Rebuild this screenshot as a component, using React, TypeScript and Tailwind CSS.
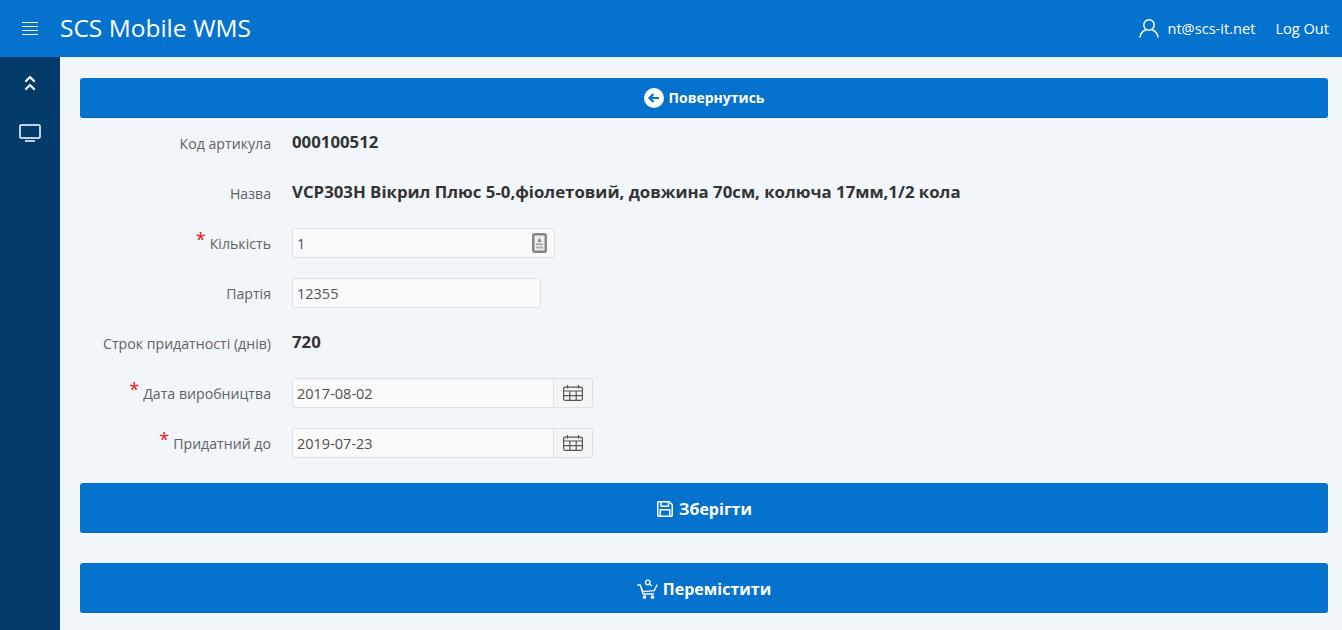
import React from 'react';

const FONT = "font-['Open_Sans','Noto_Sans',sans-serif]";

const SaveIcon = () => (
  <svg width="18" height="18" viewBox="0 0 18 18" fill="none" stroke="currentColor" strokeWidth="1.5" strokeLinejoin="round">
    <path d="M1.75 2.75a1 1 0 0 1 1-1h10.5l3 3v10.5a1 1 0 0 1-1 1H2.75a1 1 0 0 1-1-1z" />
    <path d="M5 1.75v4.5h7.5v-4.5" />
    <path d="M4.25 16.25v-6.5h9.5v6.5" />
  </svg>
);

const CartIcon = () => (
  <svg width="21" height="20" viewBox="0 0 21 20" fill="none" stroke="currentColor" strokeWidth="1.3" strokeLinecap="round" strokeLinejoin="round">
    <path d="M0.8 6h2.6l2.6 9h10.4" />
    <path d="M4.4 9l1.6 3.6 11.2-1L20 6" />
    <circle cx="10.8" cy="3.4" r="2.2" />
    <path d="M12.4 5l2.2 1.8" />
    <circle cx="7.5" cy="18" r="1.2" fill="currentColor" />
    <circle cx="15.5" cy="18" r="1.2" fill="currentColor" />
  </svg>
);

const CalendarIcon = () => (
  <svg width="20" height="16" viewBox="0 0 20 16" fill="none" stroke="#555" strokeWidth="1.2">
    <rect x="0.6" y="2.1" width="18.8" height="13.2" rx="1.5" />
    <path d="M0.6 6h18.8M0.6 10.6h18.8M6.8 6v9.3M13.2 6v9.3" />
    <path d="M4.5 0v3.5M15.5 0v3.5" />
  </svg>
);

const BarcodeIcon = () => (
  <svg width="15" height="20" viewBox="0 0 15 20" fill="none">
    <rect x="1.25" y="1.25" width="12.5" height="17.5" rx="1.5" fill="#eee" stroke="#858585" strokeWidth="2.5" />
    <path d="M7.5 4.5l2.2 4.5h-4.4z" fill="#8c8c8c" />
    <rect x="4" y="10.5" width="7" height="1.5" fill="#a0a0a0" />
    <rect x="4" y="13.5" width="7" height="2" fill="#b0b0b0" />
  </svg>
);

const Label = ({ text, required }: { text: string; required?: boolean }) => (
  <label className="w-[191px] shrink-0 pt-[2px] text-right text-[14.15px] text-[#626262]">
    {required && <span className="relative -top-[3px] mr-[4px] text-[18px] leading-none text-[#f70d1a]">*</span>}
    {text}
  </label>
);

const Row = ({ children }: { children: React.ReactNode }) => (
  <div className="flex h-[50px] items-center gap-[21px]">{children}</div>
);

const Value = ({ children }: { children: React.ReactNode }) => (
  <span className="relative -top-[1px] text-[16.8px] font-bold text-[#333]">{children}</span>
);

const inputCls =
  'h-[30px] rounded-[3px] border border-[#e0e0e0] bg-[#fafafa] px-1 text-[14.5px] text-[#505050] outline-none';

const DateField = ({ value }: { value: string }) => (
  <div className="flex">
    <input readOnly value={value} className={`${inputCls} w-[262px] rounded-r-none`} />
    <button className="flex h-[30px] w-[39px] items-center justify-center rounded-r-[3px] border border-l-0 border-[#e0e0e0] bg-[#f5f5f5]">
      <CalendarIcon />
    </button>
  </div>
);

const ActionButton = ({ icon, text, tall }: { icon: React.ReactNode; text: string; tall?: boolean }) => (
  <button
    className={`flex w-full items-center justify-center gap-[5px] rounded-[3px] border-b border-[#0562b3] bg-[#0572ce] font-bold text-white ${
      tall ? 'h-[50px] pt-[2px] text-[16px]' : 'h-[40px] text-[14px]'
    }`}
  >
    {icon}
    {text}
  </button>
);

export default function App() {
  return (
    <div className={`flex h-[630px] flex-col overflow-hidden bg-[#f1f6fa] ${FONT}`}>
      <header className="flex h-[57px] shrink-0 items-center justify-between bg-[#0572ce] pr-[13px] text-white">
        <div className="flex items-center">
          <div className="flex w-[60px] justify-center">
            <svg width="16" height="13" viewBox="0 0 16 13" stroke="currentColor" strokeWidth="1">
              <path d="M0 .5h16M0 4.5h16M0 8.5h16M0 12.5h16" />
            </svg>
          </div>
          <span className="text-[24.5px] leading-none">SCS Mobile WMS</span>
        </div>
        <div className="flex items-center text-[14.6px]">
          <svg width="20" height="20" viewBox="0 0 20 20" fill="none" stroke="currentColor" strokeWidth="1.5" strokeLinecap="round">
            <circle cx="10" cy="7" r="5.2" />
            <path d="M1 19c.5-3.5 3-6 5.5-7M19 19c-.5-3.5-3-6-5.5-7" />
          </svg>
          <span className="ml-[8px]">nt@scs-it.net</span>
          <span className="ml-[20px]">Log Out</span>
        </div>
      </header>

      <div className="flex min-h-0 flex-1">
        <aside className="flex w-[60px] shrink-0 flex-col items-center bg-[#033c6b] pt-[17px] text-white">
          <svg width="12" height="18" viewBox="0 0 12 18" fill="none" stroke="currentColor" strokeWidth="2.2" strokeLinecap="round" strokeLinejoin="round">
            <path d="M2 7l4-4 4 4M2 15l4-4 4 4" />
          </svg>
          <svg className="mt-[32px]" width="22" height="18" viewBox="0 0 22 18" fill="none" stroke="currentColor" strokeWidth="1.5">
            <rect x="1" y="1" width="20" height="13" rx="1" />
            <path d="M6 17h10" />
          </svg>
        </aside>

        <main className="min-w-0 flex-1 pl-5 pr-[14px] pt-[21px]">
          <ActionButton
            text="Повернутись"
            icon={
              <svg width="20" height="20" viewBox="0 0 20 20">
                <circle cx="10" cy="10" r="10" fill="#fff" />
                <path d="M15 10H6M9.5 6L5.5 10l4 4" fill="none" stroke="#0572ce" strokeWidth="2.2" />
              </svg>
            }
          />

          <Row>
            <Label text="Код артикула" />
            <Value>000100512</Value>
          </Row>
          <Row>
            <Label text="Назва" />
            <Value>VCP303H Вікрил Плюс 5-0,фіолетовий, довжина 70см, колюча 17мм,1/2 кола</Value>
          </Row>
          <Row>
            <Label text="Кількість" required />
            <div className="relative">
              <input readOnly value="1" className={`${inputCls} w-[263px]`} />
              <span className="absolute right-[8px] top-[5px]">
                <BarcodeIcon />
              </span>
            </div>
          </Row>
          <Row>
            <Label text="Партія" />
            <input readOnly value="12355" className={`${inputCls} w-[249px]`} />
          </Row>
          <Row>
            <Label text="Строк придатності (днів)" />
            <Value>720</Value>
          </Row>
          <Row>
            <Label text="Дата виробництва" required />
            <DateField value="2017-08-02" />
          </Row>
          <Row>
            <Label text="Придатний до" required />
            <DateField value="2019-07-23" />
          </Row>

          <div className="mt-[15px] flex flex-col gap-[30px]">
            <ActionButton tall text="Зберігти" icon={<SaveIcon />} />
            <ActionButton tall text="Перемістити" icon={<CartIcon />} />
          </div>
        </main>
      </div>
    </div>
  );
}
